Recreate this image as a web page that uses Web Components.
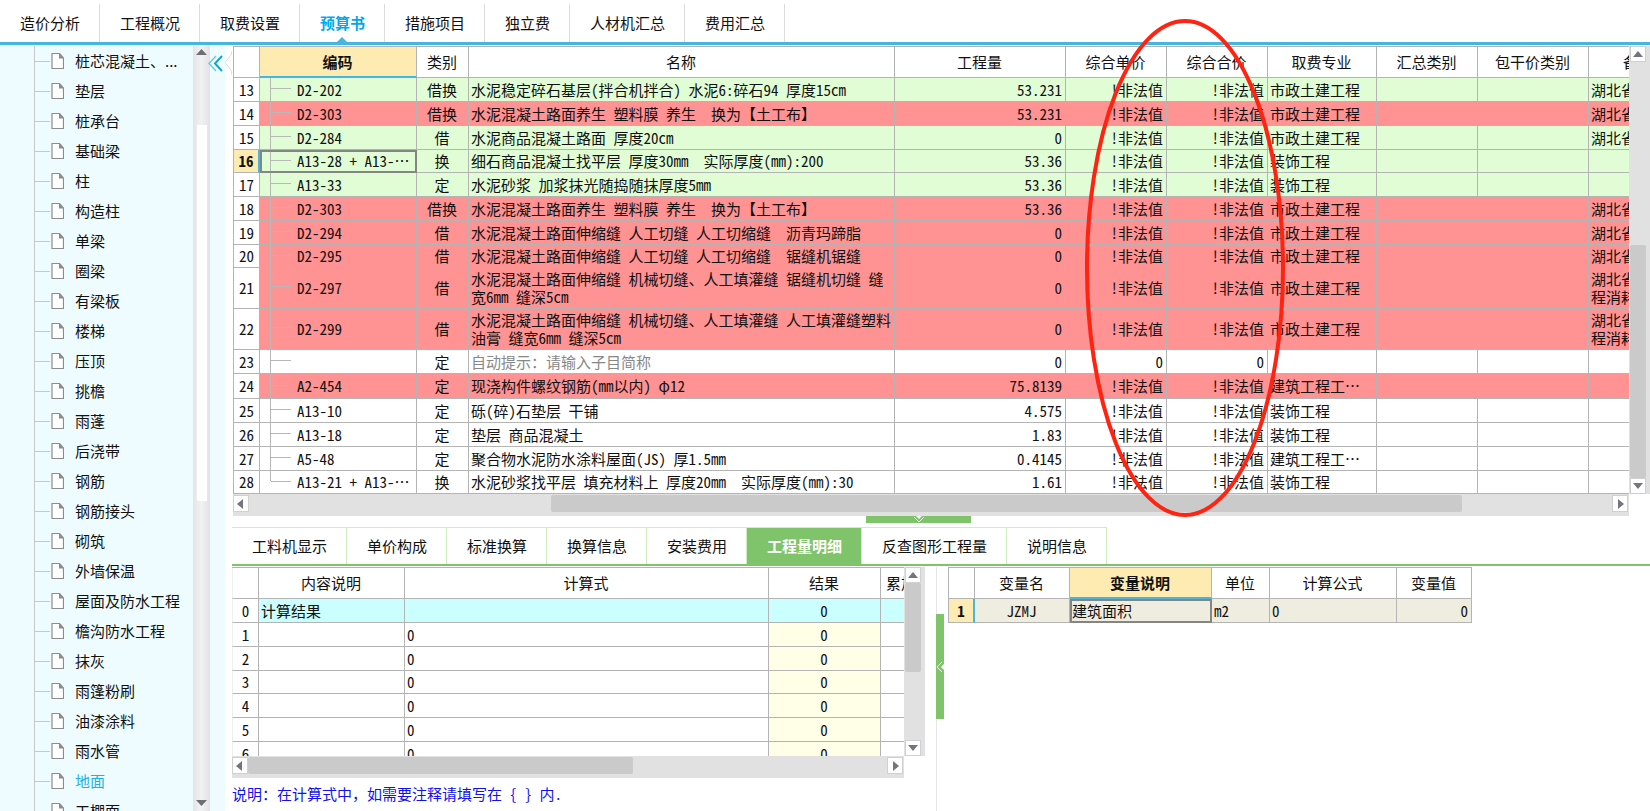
<!DOCTYPE html>
<html lang="zh-CN">
<head>
<meta charset="utf-8">
<title>预算书</title>
<style>
  html, body { margin: 0; height: 100%; }
  body {
    font-family: "Noto Sans CJK SC", sans-serif;
    font-size: 15px;
    line-height: 18px;
    color: #111;
    background: #fff;
    overflow: hidden;
    --line: #b4b4b4;
    --blue: #45b6e0;
    --green: #7fc36b;
    --pick: #feebb1;
  }
</style>
</head>
<body>
<budget-app></budget-app>
<script>
const define = (name, html, setup) => {
  const template = document.createElement('template');
  template.innerHTML = '<style>*{box-sizing:border-box}button{font:inherit;color:inherit;margin:0;padding:0;border:0;background:none}</style>' + html;
  customElements.define(name, class extends HTMLElement {
    constructor() {
      super();
      this.attachShadow({ mode: 'open' }).append(template.content.cloneNode(true));
    }
    connectedCallback() {
      if (setup && !this.ready) { this.ready = true; setup(this, this.shadowRoot); }
    }
  });
};

/* Scroll bar: from / size / rest are the proportions of track, thumb and track */
define('scroll-bar', `
<style>
  :host { display: flex; background: #e1e1e1; }
  :host([vertical]) { flex-direction: column; width: 21px; padding: 0 4px 0 1px; }
  :host(:not([vertical])) { height: 22px; padding: 1px 1px 4px 0; }
  button { flex: none; width: 16px; height: 16px; border: 1px solid #d0d0d0; background: #fff; display: flex; align-items: center; justify-content: center; }
  :host(:not([vertical])) button { height: 17px; }
  .thumb { background: #cacaca; border-radius: 2px; }
  svg { display: block; fill: #74747c; }
</style>
<button aria-label="后退"><svg width="10" height="10"><path class="a"/></svg></button>
<span class="before"></span><span class="thumb"></span><span class="after"></span>
<button aria-label="前进"><svg width="10" height="10"><path class="b"/></svg></button>`,
(el, root) => {
  const v = el.hasAttribute('vertical');
  root.querySelector('.a').setAttribute('d', v ? 'M0 8L5 2L10 8Z' : 'M7 0L1 5L7 10Z');
  root.querySelector('.b').setAttribute('d', v ? 'M0 2L5 8L10 2Z' : 'M3 0L9 5L3 10Z');
  root.querySelector('.before').style.flex = `${el.getAttribute('from')} 0 0`;
  root.querySelector('.thumb').style.flex = `${el.getAttribute('size')} 0 0`;
  root.querySelector('.after').style.flex = `${el.getAttribute('rest')} 0 0`;
});

define('main-tabs', `
<style>
  :host { display: block; border-bottom: 3px solid var(--blue); height: 45px; padding-top: 4px; }
  nav { display: flex; height: 38px; }
  button { position: relative; padding: 0 19px 0 20px; border-right: 1px solid #dcdcdc; }
  button.on { color: #00a9ef; font-weight: bold; }
  button.on::after { content: ""; position: absolute; left: 50%; bottom: 0; margin-left: -5px; border: 5px solid transparent; border-top: 0; border-bottom-color: var(--blue); }
</style>
<nav></nav>`, (el, root) => {
  root.querySelector('nav').innerHTML = ['造价分析', '工程概况', '取费设置', '预算书', '措施项目', '独立费', '人材机汇总', '费用汇总']
    .map(t => `<button${t === '预算书' ? ' class="on"' : ''}>${t}</button>`).join('');
});

define('tree-panel', `
<style>
  :host { display: flex; background: #effcff; overflow: hidden; }
  ul { list-style: none; margin: 0; padding: 1px 0 0 34px; flex: 1; overflow: hidden; }
  li { border-left: 1px solid #c8c8c8; height: 30px; }
  a { display: flex; align-items: center; height: 30px; color: inherit; text-decoration: none; white-space: nowrap; }
  a.on { color: #1eb0e4; }
  a::before { content: ""; width: 15px; height: 1px; margin-right: 1px; background: #c8c8c8; }
  svg { margin-right: 11px; flex: none; }
  .bar { width: 17px; background: linear-gradient(90deg, #e3e4e6, #f2f2f3 50%, #e1e2e6); display: flex; flex-direction: column; align-items: center; padding: 4px 0 5px; }
  .bar svg { margin: 0; }
  .track { flex: 1; width: 10px; display: flex; flex-direction: column; margin: 4px 0 5px; }
  .track i:nth-child(1) { flex: 66; } .track i:nth-child(2) { flex: 376; background: #fff; } .track i:nth-child(3) { flex: 294; }
  .fold { width: 15px; position: relative; }
  .fold svg { position: absolute; left: -2px; top: 10px; margin: 0; }
  .notch { width: 7px; background: #fff; padding-top: 5px; }
  .notch svg { display: block; margin: 0; }
</style>
<ul></ul>
<div class="bar">
  <svg width="11" height="6"><path d="M0 6L5.5 0L11 6Z" fill="#6e6e76"/></svg>
  <div class="track"><i></i><i></i><i></i></div>
  <svg width="11" height="6"><path d="M0 0L5.5 6L11 0Z" fill="#6e6e76"/></svg>
</div>
<div class="fold"><button aria-label="折叠"><svg width="16" height="17" fill="none"><path d="M8 1L1 8.500L8 16" stroke="#63c8e6" stroke-width="1.300"/><path d="M14 1L7 8.500L14 16" stroke="#17a3cb" stroke-width="2"/></svg></button></div>
<div class="notch"><svg width="7" height="26"><path d="M7 1L6 5L0 12.500L6 20L7 25" fill="#fff" stroke="#dcdcdc"/></svg></div>`,
(el, root) => {
  root.querySelector('ul').innerHTML = ['桩芯混凝土、...', '垫层', '桩承台', '基础梁', '柱', '构造柱', '单梁', '圈梁', '有梁板', '楼梯', '压顶', '挑檐', '雨蓬', '后浇带', '钢筋', '钢筋接头', '砌筑', '外墙保温', '屋面及防水工程', '檐沟防水工程', '抹灰', '雨篷粉刷', '油漆涂料', '雨水管', '地面', '工棚面']
    .map(t => `<li><a href="#"${t === '地面' ? ' class="on"' : ''}><svg width="13" height="16"><path d="M1 .5H8.500L12.500 5V15.500H1Z" fill="#fff" stroke="#8c8c8c" stroke-width="1.200"/><path d="M8 0V5.500H13Z" fill="#8c8c8c"/></svg>${t}</a></li>`).join('');
});

/* Table look shared by the three grids */
const gridStyle = `
<style>
  :host { display: block; overflow: hidden; font-feature-settings: "hwid"; }
  table { table-layout: fixed; border-collapse: separate; border-spacing: 0; border-top: 1px solid var(--line); width: 0; }
  th, td { padding: 0 3px 0 2px; border-right: 1px solid var(--line); border-bottom: 1px solid var(--line); white-space: pre-wrap; font-weight: normal; overflow: hidden; }
  tr > :first-child { padding: 0; text-align: center; border-left: 1px solid var(--line); background: #fff; }
  thead tr { height: 31px; }
  tbody tr { height: 24px; }
  tbody tr:nth-child(4n) { height: 23px; }
  th { text-align: center; }
  th.pick { background: var(--pick); font-weight: bold; border-bottom: 2px solid var(--blue); }
  tr.cur > :first-child { background: var(--pick); font-weight: bold; border-right: 2px solid var(--blue); }
  td.box { outline: 2px solid #858585; outline-offset: -2px; }
  .c { text-align: center; } .r { text-align: right; }
</style>`;
const cols = list => '<colgroup>' + list.map(w => `<col style="width:${w}px">`).join('') + '</colgroup>';
const head = (list, pick) => '<thead><tr>' + list.map(t => `<th${t === pick ? ' class="pick"' : ''}>${t}</th>`).join('') + '</tr></thead>';

define('budget-grid', gridStyle + `
<style>
  tbody tr.g { background: #e1fdd6; }
  tbody tr.d { background: #ff9292; }
  tbody tr.tall { height: 41px; }
  tbody tr.mid { height: 25px; }
  .code { padding-left: 37px; padding-right: 0; white-space: nowrap;
    background: linear-gradient(#b8b8b8, #b8b8b8) 10px 0 / 1px 100% no-repeat, linear-gradient(#b8b8b8, #b8b8b8) 11px 47% / 20px 1px no-repeat; }
  tr:last-child .code { background-size: 1px 47%, 20px 1px; }
  .hint { color: #888; }
</style>
<table></table>`, (el, root) => {
  const bad = '!非法值', city = '市政土建工程', deco = '装饰工程', hb = '湖北省', hb2 = '湖北省程消耗';
  const rows = [
    ['g', 'D2-202', '借换', '水泥稳定碎石基层(拌合机拌合) 水泥6:碎石94 厚度15cm', '53.231', bad, city, hb],
    ['d', 'D2-303', '借换', '水泥混凝土路面养生 塑料膜 养生  换为【土工布】', '53.231', bad, city, hb],
    ['g', 'D2-284', '借', '水泥商品混凝土路面 厚度20cm', '0', bad, city, hb],
    ['g cur', 'A13-28 + A13-…', '换', '细石商品混凝土找平层 厚度30mm  实际厚度(mm):200', '53.36', bad, deco, ''],
    ['g', 'A13-33', '定', '水泥砂浆 加浆抹光随捣随抹厚度5mm', '53.36', bad, deco, ''],
    ['d', 'D2-303', '借换', '水泥混凝土路面养生 塑料膜 养生  换为【土工布】', '53.36', bad, city, hb],
    ['d', 'D2-294', '借', '水泥混凝土路面伸缩缝 人工切缝 人工切缩缝  沥青玛蹄脂', '0', bad, city, hb],
    ['d', 'D2-295', '借', '水泥混凝土路面伸缩缝 人工切缝 人工切缩缝  锯缝机锯缝', '0', bad, city, hb],
    ['d tall', 'D2-297', '借', '水泥混凝土路面伸缩缝 机械切缝、人工填灌缝 锯缝机切缝 缝宽6mm 缝深5cm', '0', bad, city, hb2],
    ['d tall', 'D2-299', '借', '水泥混凝土路面伸缩缝 机械切缝、人工填灌缝 人工填灌缝塑料油膏 缝宽6mm 缝深5cm', '0', bad, city, hb2],
    ['', '', '定', '<span class="hint">自动提示：请输入子目简称</span>', '0', '0', '', ''],
    ['d mid', 'A2-454', '定', '现浇构件螺纹钢筋(mm以内) φ12', '75.8139', bad, '建筑工程工…', ''],
    ['', 'A13-10', '定', '砾(碎)石垫层 干铺', '4.575', bad, deco, ''],
    ['', 'A13-18', '定', '垫层 商品混凝土', '1.83', bad, deco, ''],
    ['', 'A5-48', '定', '聚合物水泥防水涂料屋面(JS) 厚1.5mm', '0.4145', bad, '建筑工程工…', ''],
    ['', 'A13-21 + A13-…', '换', '水泥砂浆找平层 填充材料上 厚度20mm  实际厚度(mm):30', '1.61', bad, deco, ''],
  ];
  root.querySelector('table').innerHTML =
    cols([27, 157, 52, 426, 171, 101, 101, 109, 101, 111, 100]) +
    head(['', '编码', '类别', '名称', '工程量', '综合单价', '综合合价', '取费专业', '汇总类别', '包干价类别', '备注'], '编码') +
    '<tbody>' + rows.map((r, i) => `<tr class="${r[0]}"><td>${13 + i}</td><td class="code${r[0].includes('cur') ? ' box' : ''}">${r[1]}</td><td class="c">${r[2]}</td><td>${r[3]}</td><td class="r">${r[4]}</td><td class="r">${r[5]}</td><td class="r">${r[5]}</td><td>${r[6]}</td><td></td><td></td><td class="note">${r[7].replace('省程', '省<br>程')}</td></tr>`).join('') + '</tbody>';
});

define('formula-grid', gridStyle + `
<style>
  tbody tr:first-child { background: #cbfeff; }
  tbody tr:not(:first-child) .res { background: #fffee6; }
  tr > :first-child { border-left-color: #eee; }
</style>
<table></table>`, (el, root) => {
  root.querySelector('table').innerHTML =
    cols([27, 146, 364, 112, 42]) + head(['', '内容说明', '计算式', '结果', '累加'], null) + '<tbody>' +
    [0, 1, 2, 3, 4, 5, 6].map(i => `<tr><td>${i}</td><td>${i ? '' : '计算结果'}</td><td>${i ? 0 : ''}</td><td class="c res">0</td><td></td></tr>`).join('') + '</tbody>';
});

define('variable-grid', gridStyle + `
<style>tbody tr { background: #efeddf; }</style>
<table></table>`, (el, root) => {
  root.querySelector('table').innerHTML =
    cols([27, 95, 142, 58, 127, 75]) + head(['', '变量名', '变量说明', '单位', '计算公式', '变量值'], '变量说明') +
    '<tbody><tr class="cur"><td>1</td><td class="c">JZMJ</td><td class="box">建筑面积</td><td>m2</td><td>0</td><td class="r">0</td></tr></tbody>';
});

define('detail-tabs', `
<style>
  :host { display: flex; height: 39px; border-bottom: 2px solid var(--green); }
  button { padding: 0 19px 0 20px; border-top: 1px solid #cdeebd; border-right: 1px solid #cdeebd; white-space: nowrap; }
  button.on { background: var(--green); color: #fff; font-weight: bold; }
</style>`, (el, root) => {
  root.innerHTML += ['工料机显示', '单价构成', '标准换算', '换算信息', '安装费用', '工程量明细', '反查图形工程量', '说明信息']
    .map(t => `<button${t === '工程量明细' ? ' class="on"' : ''}>${t}</button>`).join('');
});

define('budget-app', `
<style>
  :host { display: flex; flex-direction: column; height: 100vh; position: relative; }
  .body { flex: 1; min-height: 0; display: grid; grid-template: minmax(0, 1fr) / 232px minmax(0, 1fr); }
  tree-panel { min-height: 0; }
  main { display: flex; flex-direction: column; min-width: 0; min-height: 0; }
  .top { display: grid; grid-template-columns: minmax(0, 1fr) 21px; padding: 1px 0 0 1px; }
  .split { height: 11px; display: flex; justify-content: center; padding-right: 45px; }
  .split button { width: 105px; height: 7px; background: var(--green); display: flex; justify-content: center; }
  .bottom { flex: 1; min-height: 0; display: grid; grid-template: minmax(0, 1fr) / 693px 11px minmax(0, 1fr); padding-top: 1px; }
  .left { display: grid; grid-template: minmax(0, 1fr) auto auto / minmax(0, 1fr) 21px; min-height: 0; }
  .left p { grid-column: 1 / 3; margin: 0; height: 33px; line-height: 32px; color: #1010f0; }
  .left p span { font-feature-settings: "hwid"; white-space: pre; }
  .right { border-left: 1px solid #e6e6e6; display: flex; }
  .right button { flex: none; width: 8px; height: 105px; margin: 47px 4px 0 -1px; background: var(--green); display: flex; align-items: center; }
  .mark { position: absolute; left: 1085px; top: 18px; pointer-events: none; }
</style>
<main-tabs></main-tabs>
<div class="body">
  <tree-panel></tree-panel>
  <main>
    <div class="top">
      <budget-grid></budget-grid><scroll-bar vertical from="183" size="232" rest="0"></scroll-bar>
      <scroll-bar from="302" size="910" rest="150"></scroll-bar>
    </div>
    <div class="split"><button aria-label="收起"><svg width="14" height="7" fill="none" stroke="#fff"><path d="M4 0H10L7 3Z" fill="#fff" stroke="none"/><path d="M2 1L7 6L12 1"/></svg></button></div>
    <detail-tabs></detail-tabs>
    <div class="bottom">
      <div class="left">
        <formula-grid></formula-grid><scroll-bar vertical from="0" size="88" rest="68"></scroll-bar>
        <scroll-bar from="0" size="385" rest="254"></scroll-bar><span></span>
        <p>说明：在计算式中，如需要注释请填写在<span> { } </span>内<span>.</span></p>
      </div>
      <span></span>
      <div class="right">
        <button aria-label="展开"><svg width="8" height="12" fill="none" stroke="#fff"><path d="M8 3V9L5 6Z" fill="#fff" stroke="none"/><path d="M6 1L1 6L6 11"/></svg></button>
        <variable-grid></variable-grid>
      </div>
    </div>
  </main>
</div>
<svg class="mark" width="200" height="500"><ellipse cx="100" cy="250" rx="98" ry="247" fill="none" stroke="#ff2312" stroke-width="4"/></svg>`);
</script>
</body>
</html>
